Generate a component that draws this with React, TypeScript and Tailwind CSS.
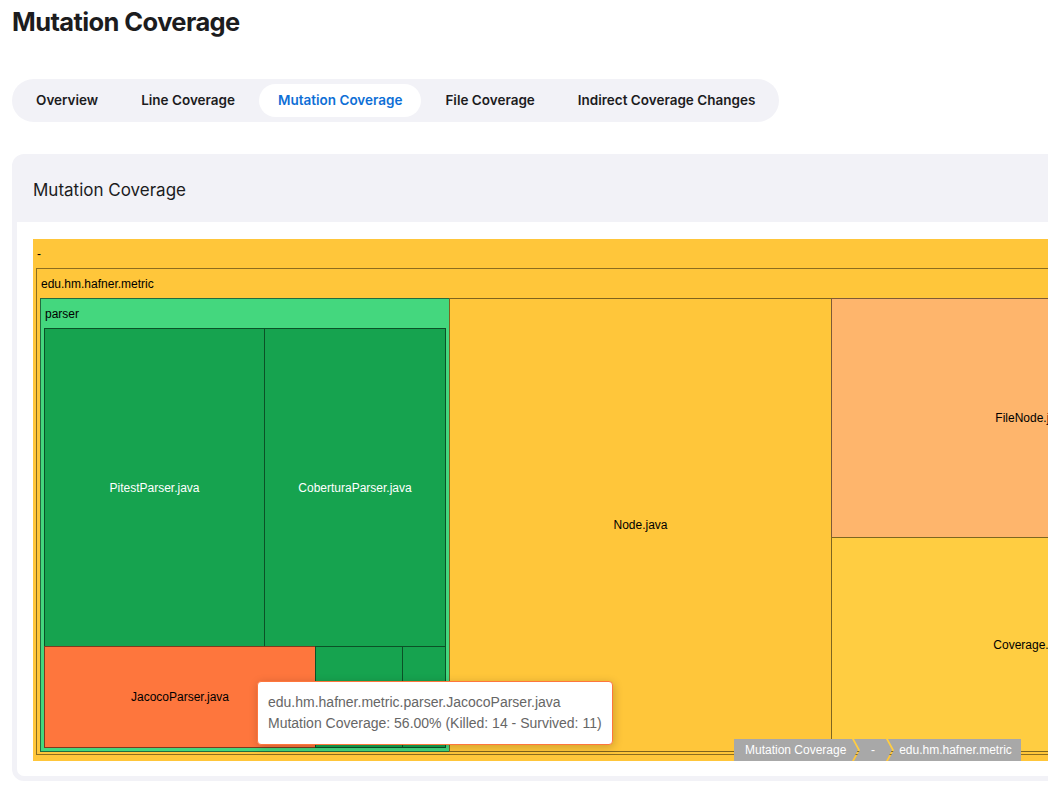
const tabs = ["Overview", "Line Coverage", "Mutation Coverage", "File Coverage", "Indirect Coverage Changes"];

function Leaf({
  label,
  className,
}: {
  label?: string;
  className: string;
}) {
  return (
    <div className={"flex items-center justify-center border border-black/50 " + className}>
      {label}
    </div>
  );
}

export default function App() {
  return (
    <div className="w-[1048px] h-[804px] overflow-hidden bg-white font-['Inter',sans-serif] text-[#1c1c1e]">
      <div className="px-3">
        <h1 className="pt-[6px] text-[25.5px] leading-[32px] font-bold tracking-[-0.6px]">Mutation Coverage</h1>
        <div className="mt-[41px] flex w-fit items-center gap-[5px] rounded-full bg-[#f2f2f7] p-[5px]">
          {tabs.map((t) => (
            <div
              key={t}
              className={
                t === "Mutation Coverage"
                  ? "flex h-[33px] items-center rounded-full bg-white px-[19px] text-[13.5px] font-semibold text-[#0e6fd6]"
                  : "flex h-[33px] items-center rounded-full px-[19px] text-[13.5px] font-semibold text-[#1c1c1e]"
              }
            >
              {t}
            </div>
          ))}
        </div>
        <div className="mt-[32px] w-[1249px] rounded-xl border-[5px] border-[#f2f2f7] bg-white">
          <div className="flex h-[63px] items-center bg-[#f2f2f7] pl-4 text-[17px] text-[#1c1c1e]">Mutation Coverage</div>
          <div className="pl-4 pt-[17px] pb-[15px]">
            {/* treemap */}
            <div className="relative flex h-[522px] w-[1207px] flex-col bg-[#ffc63a] px-[3px] pb-[6px] font-['Liberation_Sans',Arial,sans-serif] text-[12px] text-black">
              <div className="flex h-[29px] items-center pl-[1px]">-</div>
              <div className="flex h-[487px] flex-col border border-black/45 bg-[#ffc63a]">
                <div className="flex h-[29px] items-center pl-[4px]">edu.hm.hafner.metric</div>
                <div className="flex px-[3px] pb-[2px]">
                  {/* parser */}
                  <div className="flex h-[454px] w-[410px] flex-col border border-black/50 bg-[#44d77e]">
                    <div className="flex h-[29px] items-center pl-[4px]">parser</div>
                    <div className="flex flex-col px-[3px] pb-[3px]">
                      <div className="flex h-[319px]">
                        <Leaf label="PitestParser.java" className="h-full w-[221px] bg-[#16a34f] text-white" />
                        <Leaf label="CoberturaParser.java" className="-ml-px h-full w-[182px] bg-[#16a34f] text-white" />
                      </div>
                      <div className="-mt-px flex h-[102px]">
                        <Leaf label="JacocoParser.java" className="h-full w-[272px] bg-[#fe763d]" />
                        <Leaf className="-ml-px h-full w-[88px] bg-[#16a34f]" />
                        <Leaf className="-ml-px h-full w-[44px] bg-[#16a34f]" />
                      </div>
                    </div>
                  </div>
                  <Leaf label="Node.java" className="-ml-px h-[454px] w-[383px] bg-[#ffc63a]" />
                  <div className="-ml-px flex h-[454px] w-[402px] flex-col">
                    <Leaf label="FileNode.java" className="h-[240px] w-full bg-[#feb56c]" />
                    <Leaf label="Coverage.java" className="-mt-px h-[215px] w-full bg-[#ffcd41]" />
                  </div>
                </div>
              </div>

              {/* tooltip */}
              <div className="absolute left-[224px] top-[442px] whitespace-nowrap rounded-[4px] border border-[#fe763d] bg-white px-[10px] py-[10px] text-[14px] leading-[21px] text-[#666] shadow-[1px_2px_10px_rgba(0,0,0,0.2)]">
                <div>edu.hm.hafner.metric.parser.JacocoParser.java</div>
                <div>Mutation Coverage: 56.00% (Killed: 14 - Survived: 11)</div>
              </div>

              {/* breadcrumb */}
              <div className="absolute bottom-0 left-[701px] flex h-[22px] text-[12px] text-white">
                <div className="flex h-full w-[124px] items-center bg-[#a8a8a8] pl-[11px] [clip-path:polygon(0_0,118px_0,124px_50%,118px_100%,0_100%)]">
                  Mutation Coverage
                </div>
                <div className="-ml-[4px] flex h-full w-[38px] items-center justify-center bg-[#a8a8a8] [clip-path:polygon(0_0,32px_0,38px_50%,32px_100%,0_100%,6px_50%)]">
                  -
                </div>
                <div className="-ml-[4px] flex h-full w-[133px] items-center justify-center bg-[#a8a8a8] pl-[2px] [clip-path:polygon(0_0,100%_0,100%_100%,0_100%,6px_50%)]">
                  edu.hm.hafner.metric
                </div>
              </div>
            </div>
          </div>
        </div>
      </div>
    </div>
  );
}
